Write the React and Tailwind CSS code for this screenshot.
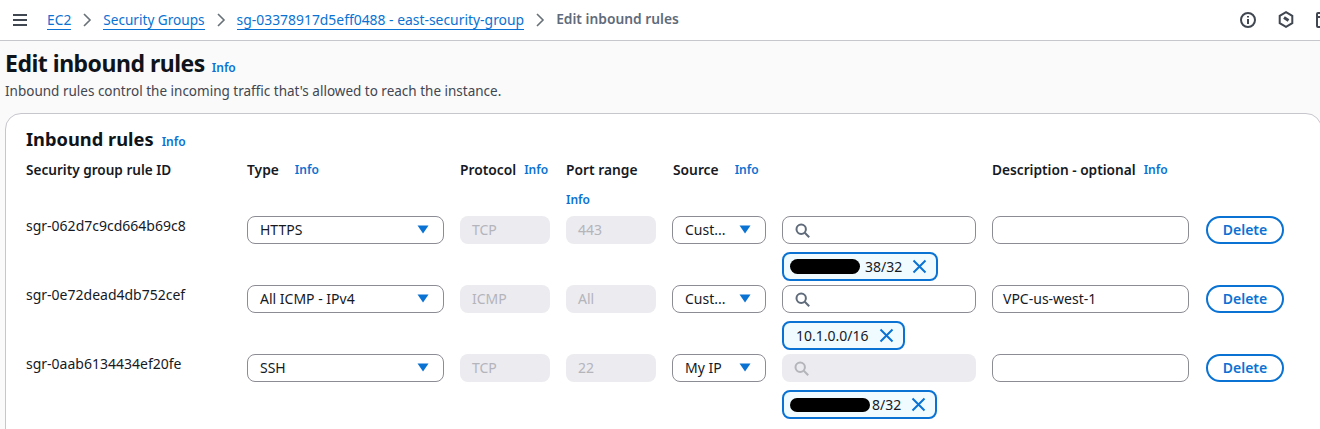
const rows = [
  { id: 'sgr-062d7c9cd664b69c8', type: 'HTTPS', protocol: 'TCP', port: '443', source: 'Cust...', tag: '38/32', blob: 'h-[15px] w-[70px] -ml-[6px] mr-[5px]', desc: '' },
  { id: 'sgr-0e72dead4db752cef', type: 'All ICMP - IPv4', protocol: 'ICMP', port: 'All', source: 'Cust...', tag: '10.1.0.0/16', desc: 'VPC-us-west-1' },
  { id: 'sgr-0aab6134434ef20fe', type: 'SSH', protocol: 'TCP', port: '22', source: 'My IP', tag: '8/32', blob: 'h-[14px] w-[80px] -ml-[6px] mr-[2px]', desc: '', disabled: true },
]

function Info({ className = '' }) {
  return <a className={`text-[12px] font-semibold leading-4 text-[#0972d3] ${className}`}>Info</a>
}

function Caret() {
  return (
    <svg width="12" height="9" viewBox="0 0 12 9" className="shrink-0">
      <path d="M0.5 0.5H11.5L6 8.5Z" fill="#0972d3" />
    </svg>
  )
}

function Chevron() {
  return (
    <svg width="10" height="14" viewBox="0 0 10 14" className="shrink-0" fill="none" stroke="#687078" strokeWidth="1.6">
      <path d="M2 1l6 6-6 6" />
    </svg>
  )
}

function SearchIcon({ muted }) {
  return (
    <svg width="15" height="15" viewBox="0 0 15 15" fill="none" stroke={muted ? '#b4b4bb' : '#5f6b7a'} strokeWidth="2">
      <circle cx="6.2" cy="6.2" r="4.7" />
      <path d="M9.8 9.8l4.4 4.4" />
    </svg>
  )
}

function Select({ label }) {
  return (
    <div className="flex h-7 items-center justify-between rounded-lg border border-[#8c8c94] bg-white pb-px pl-[12px] pr-[14px] text-[14px] text-[#16191f]">
      <span>{label}</span>
      <Caret />
    </div>
  )
}

function ReadOnly({ value }) {
  return (
    <div className="flex h-7 items-center rounded-lg bg-[#ebebf0] pb-px px-[12px] text-[14px] text-[#b4b4bb]">{value}</div>
  )
}

function Tag({ text, blob }) {
  return (
    <div className="mt-[8px] flex h-[29px] w-fit items-center gap-[10px] rounded-lg border-2 border-[#0972d3] bg-[#f0fbff] pl-[12px] pr-[9px] text-[14px] text-[#16191f]">
      <span className="flex items-center">
        {blob && <span className={`rounded-full bg-black ${blob}`} />}
        {text}
      </span>
      <svg width="15" height="15" viewBox="0 0 15 15" fill="none" stroke="#0972d3" strokeWidth="2">
        <path d="M1.5 1.5l12 12M13.5 1.5l-12 12" />
      </svg>
    </div>
  )
}

function Rule({ row }) {
  return (
    <>
      <div className="text-[14px] leading-5 text-[#16191f]">{row.id}</div>
      <Select label={row.type} />
      <ReadOnly value={row.protocol} />
      <ReadOnly value={row.port} />
      <Select label={row.source} />
      <div>
        <div className={`flex h-7 items-center rounded-lg pl-[12px] ${row.disabled ? 'bg-[#ebebf0]' : 'border border-[#8c8c94] bg-white'}`}>
          <SearchIcon muted={row.disabled} />
        </div>
        <Tag text={row.tag} blob={row.blob} />
      </div>
      <div className="flex h-7 items-center rounded-lg border border-[#8c8c94] bg-white px-[10px] pb-px text-[14px] text-[#16191f]">{row.desc}</div>
      <button className="ml-px flex h-7 w-[78px] items-center justify-center rounded-full border-2 border-[#0972d3] bg-white pb-px text-[14px] font-semibold text-[#0972d3]">
        Delete
      </button>
    </>
  )
}

export default function App() {
  return (
    <div className="h-[429px] w-[1320px] overflow-hidden bg-[#fafafa] font-['Noto_Sans',sans-serif] text-[#16191f]">
      <header className="flex h-[41px] items-center border-b border-[#c6c6cd] bg-white pb-px">
        <svg width="16" height="14" viewBox="0 0 16 14" className="ml-[12px] mr-[19px]" stroke="#414750" strokeWidth="2">
          <path d="M1 2h14M1 7h14M1 12h14" />
        </svg>
        <nav className="flex items-center gap-[11px] text-[13.8px]">
          <a className="border-b border-[#0972d3] leading-[19px] text-[#0972d3]">EC2</a>
          <Chevron />
          <a className="border-b border-[#0972d3] text-[13.6px] leading-[19px] text-[#0972d3]">Security Groups</a>
          <Chevron />
          <a className="border-b border-[#0972d3] text-[13.9px] leading-[19px] text-[#0972d3]">sg-03378917d5eff0488 - east-security-group</a>
          <Chevron />
          <span className="font-semibold text-[#5f6b7a]">Edit inbound rules</span>
        </nav>
        <div className="-mr-[12px] ml-auto flex items-center gap-[22px]">
          <svg width="16" height="16" viewBox="0 0 16 16" fill="none" stroke="#414750" strokeWidth="2">
            <circle cx="8" cy="8" r="7" />
            <path d="M8 7v5M8 4v1.6" />
          </svg>
          <svg width="16" height="17" viewBox="0 0 16 17" fill="none" stroke="#414750" strokeWidth="2">
            <path d="M8 1.2l6.3 3.6v7.4L8 15.8l-6.3-3.6V4.8Z" />
            <path d="M6 6.5l4.5 3" strokeWidth="3" />
          </svg>
          <svg width="16" height="16" viewBox="0 0 16 16" fill="none" stroke="#414750" strokeWidth="2">
            <rect x="1" y="1" width="14" height="14" rx="1" />
            <path d="M1 5h14" />
          </svg>
        </div>
      </header>

      <main className="pl-[5px]">
        <div className="flex items-baseline gap-[7px] pt-[7px]">
          <h1 className="text-[23px] font-bold leading-[30px] tracking-[-0.5px] text-[#0f141a]">Edit inbound rules</h1>
          <Info />
        </div>
        <p className="mt-[3px] text-[13.5px] leading-5 text-[#424650]">Inbound rules control the incoming traffic that's allowed to reach the instance.</p>

        <section className="-mr-[2px] mt-[12px] h-[400px] rounded-t-2xl border border-[#c6c6cd] bg-white px-[20px] pt-[13px]">
          <div className="flex items-baseline gap-[8px]">
            <h2 className="text-[18.3px] font-bold leading-6 text-[#0f141a]">Inbound rules</h2>
            <Info />
          </div>
          <div className="mt-[9px] grid grid-cols-[205px_197px_90px_90px_94px_194px_197px_78px] gap-x-4 gap-y-1">
            <div className="h-5 text-[13.6px] font-semibold leading-5">Security group rule ID</div>
            <div className="flex h-5 items-center gap-[16px] text-[13.8px] font-semibold">Type <Info /></div>
            <div className="flex h-5 items-center gap-[8px] whitespace-nowrap text-[13.8px] font-semibold">Protocol <Info /></div>
            <div className="pb-[4px] text-[13.8px] font-semibold leading-5">
              Port range
              <Info className="mt-[12px] block" />
            </div>
            <div className="ml-px flex h-5 items-center gap-[16px] text-[13.8px] font-semibold">Source <Info /></div>
            <div />
            <div className="flex h-5 items-center gap-[8px] whitespace-nowrap text-[13.7px] font-semibold">Description - optional <Info /></div>
            <div />
            {rows.map((row) => <Rule key={row.id} row={row} />)}
          </div>
        </section>
      </main>
    </div>
  )
}
